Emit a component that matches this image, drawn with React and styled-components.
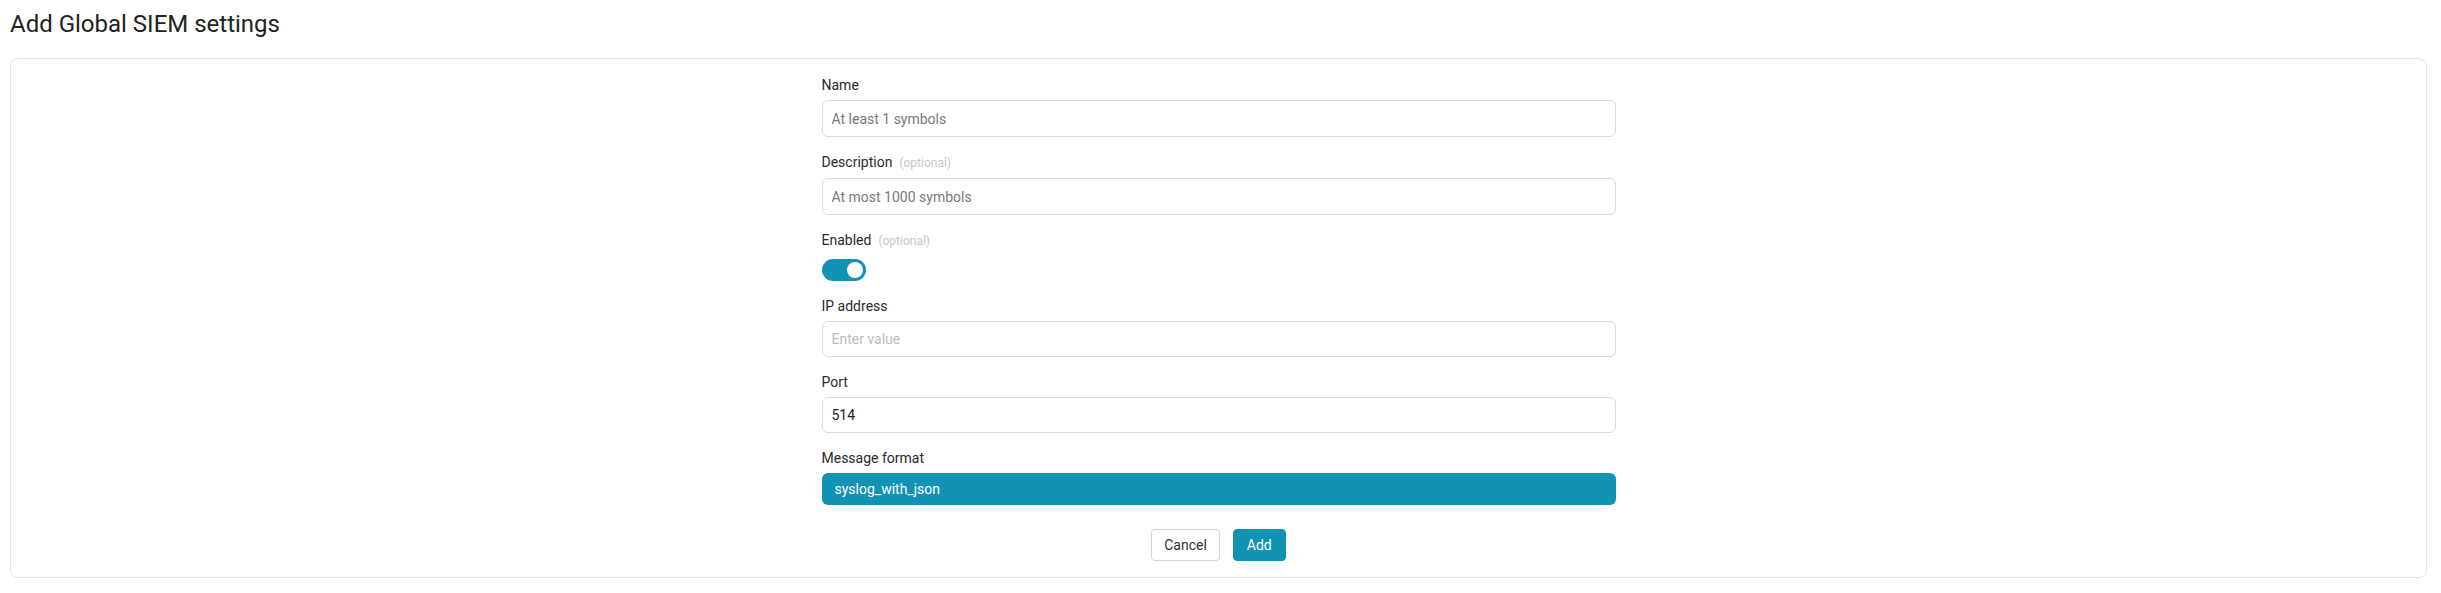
import React, { useState } from 'react'
import styled, { createGlobalStyle } from 'styled-components'

const GlobalStyle = createGlobalStyle`
  html, body {
    margin: 0;
    padding: 0;
    background: #fff;
    font-family: Roboto, 'Liberation Sans', sans-serif;
    color: #222;
  }
  * { box-sizing: border-box; }
`

const Page = styled.div`
  padding: 10px 14px 0 10px;
`

const Title = styled.h1`
  margin: 0 0 20px;
  font-size: 24px;
  line-height: 28px;
  font-weight: 400;
  color: #222;
`

const Card = styled.div`
  border: 1px solid #e4e4e4;
  border-radius: 8px;
  padding: 16px 16px 16px;
  display: flex;
  justify-content: center;
`

const Form = styled.form`
  width: 794px;
  display: flex;
  flex-direction: column;
`

const Field = styled.div`
  display: flex;
  flex-direction: column;
  margin-bottom: 15px;
`

const Label = styled.label`
  font-size: 14px;
  line-height: 20px;
  color: #2a2a2a;
  margin-bottom: ${p => (p.$spaced ? '8px' : '5px')};
`

const Optional = styled.span`
  margin-left: 7px;
  font-size: 12px;
  color: #c6c6c6;
`

const Input = styled.input`
  height: ${p => p.$h || 36}px;
  border: 1px solid #dadada;
  border-radius: 6px;
  padding: 0 9px;
  font-family: inherit;
  font-size: 14px;
  color: #222;
  outline: none;
  &::placeholder {
    color: ${p => (p.$faint ? '#bdbdbd' : '#7a7a7a')};
  }
`

const Toggle = styled.button`
  width: 44px;
  height: 22px;
  border: none;
  border-radius: 11px;
  background: #1393b4;
  padding: 0 3px;
  display: flex;
  align-items: center;
  justify-content: ${p => (p.$on ? 'flex-end' : 'flex-start')};
  cursor: pointer;
`

const Knob = styled.span`
  width: 16px;
  height: 16px;
  border-radius: 50%;
  background: #fff;
`

const Select = styled.div`
  height: 32px;
  border-radius: 6px;
  background: #1393b4;
  color: #fff;
  font-size: 14px;
  padding: 0 13px;
  display: flex;
  align-items: center;
`

const Actions = styled.div`
  display: flex;
  justify-content: center;
  gap: 13px;
  margin-top: 9px;
`

const Button = styled.button`
  height: 32px;
  padding: 0 ${p => (p.$primary ? 13 : 12)}px;
  border-radius: 4px;
  font-family: inherit;
  font-size: 14px;
  border: 1px solid ${p => (p.$primary ? '#1393b4' : '#d6d6d6')};
  background: ${p => (p.$primary ? '#1393b4' : '#fff')};
  color: ${p => (p.$primary ? '#fff' : '#333')};
  cursor: pointer;
`

export default function App() {
  const [enabled, setEnabled] = useState(true)

  return (
    <>
      <GlobalStyle />
      <Page>
        <Title>Add Global SIEM settings</Title>
        <Card>
          <Form onSubmit={e => e.preventDefault()}>
            <Field>
              <Label>Name</Label>
              <Input $h={37} placeholder="At least 1 symbols" />
            </Field>
            <Field>
              <Label>
                Description<Optional>(optional)</Optional>
              </Label>
              <Input $h={37} placeholder="At most 1000 symbols" />
            </Field>
            <Field>
              <Label $spaced>
                Enabled<Optional>(optional)</Optional>
              </Label>
              <Toggle type="button" $on={enabled} onClick={() => setEnabled(!enabled)}>
                <Knob />
              </Toggle>
            </Field>
            <Field>
              <Label>IP address</Label>
              <Input $faint placeholder="Enter value" />
            </Field>
            <Field>
              <Label>Port</Label>
              <Input defaultValue="514" />
            </Field>
            <Field>
              <Label>Message format</Label>
              <Select>syslog_with_json</Select>
            </Field>
            <Actions>
              <Button type="button">Cancel</Button>
              <Button type="submit" $primary>Add</Button>
            </Actions>
          </Form>
        </Card>
      </Page>
    </>
  )
}
